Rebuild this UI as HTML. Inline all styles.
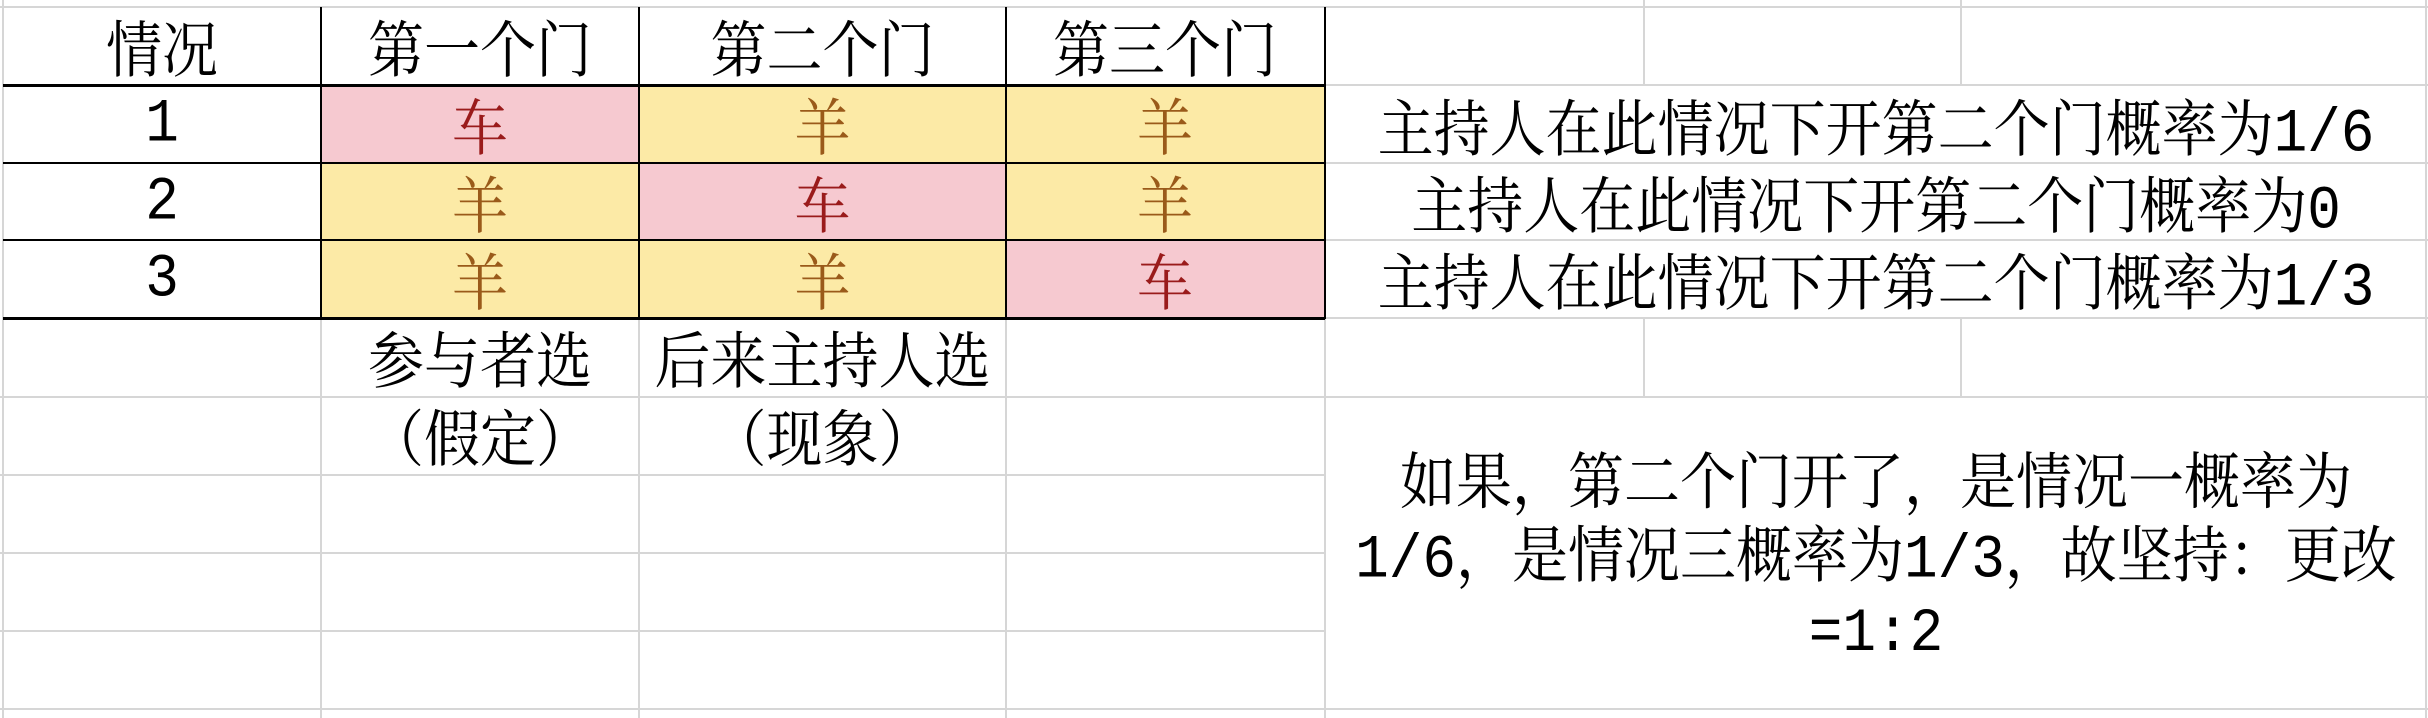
<!DOCTYPE html>
<html><head><meta charset="utf-8"><style>
body{margin:0;width:2428px;height:718px;background:#fff;position:relative;overflow:hidden;font-family:"Liberation Mono","Noto Serif CJK SC",serif;}
.h{position:absolute;height:2px;background:#d6d6d6}
.v{position:absolute;width:2px;background:#d6d6d6}
.c{position:absolute;display:flex;align-items:center;justify-content:center;font-size:56px;color:#000;white-space:nowrap}
.c span{display:inline-block;transform:scaleY(1.1)}
.p{background:#f6c9d0}.y{background:#fceaa6}
.car{color:#9a1b1b}.sh{color:#9a5a1a}
.k{background:#000}
</style></head><body>
<div class="c p car" style="left:321px;top:85px;width:318px;height:78px"><span>车</span></div>
<div class="c y sh" style="left:639px;top:85px;width:367px;height:78px"><span>羊</span></div>
<div class="c y sh" style="left:1006px;top:85px;width:318px;height:78px"><span>羊</span></div>
<div class="c y sh" style="left:321px;top:163px;width:318px;height:77px"><span>羊</span></div>
<div class="c p car" style="left:639px;top:163px;width:367px;height:77px"><span>车</span></div>
<div class="c y sh" style="left:1006px;top:163px;width:318px;height:77px"><span>羊</span></div>
<div class="c y sh" style="left:321px;top:240px;width:318px;height:78px"><span>羊</span></div>
<div class="c y sh" style="left:639px;top:240px;width:367px;height:78px"><span>羊</span></div>
<div class="c p car" style="left:1006px;top:240px;width:318px;height:78px"><span>车</span></div>
<div class="h" style="left:0;top:6px;width:2428px"></div>
<div class="h" style="left:1324px;top:84px;width:1104px"></div>
<div class="h" style="left:1324px;top:162px;width:1104px"></div>
<div class="h" style="left:1324px;top:239px;width:1104px"></div>
<div class="h" style="left:1324px;top:317px;width:1104px"></div>
<div class="h" style="left:0;top:396px;width:2428px"></div>
<div class="h" style="left:0;top:474px;width:1324px"></div>
<div class="h" style="left:0;top:552px;width:1324px"></div>
<div class="h" style="left:0;top:630px;width:1324px"></div>
<div class="h" style="left:0;top:708px;width:2428px"></div>
<div class="v" style="left:2px;top:0;height:718px"></div>
<div class="v" style="left:320px;top:318px;height:400px"></div>
<div class="v" style="left:638px;top:318px;height:400px"></div>
<div class="v" style="left:1005px;top:318px;height:400px"></div>
<div class="v" style="left:1643px;top:0;height:85px"></div>
<div class="v" style="left:1960px;top:0;height:85px"></div>
<div class="v" style="left:1643px;top:318px;height:79px"></div>
<div class="v" style="left:1960px;top:318px;height:79px"></div>
<div class="v" style="left:2425px;top:0;height:718px"></div>
<div class="v" style="left:1324px;top:318px;height:400px"></div>
<div class="k" style="position:absolute;left:3px;top:84px;width:1322px;height:3px"></div>
<div class="k" style="position:absolute;left:3px;top:162px;width:1322px;height:2px"></div>
<div class="k" style="position:absolute;left:3px;top:239px;width:1322px;height:2px"></div>
<div class="k" style="position:absolute;left:3px;top:317px;width:1322px;height:3px"></div>
<div class="k" style="position:absolute;left:320px;top:7px;width:2px;height:312px"></div>
<div class="k" style="position:absolute;left:638px;top:7px;width:2px;height:312px"></div>
<div class="k" style="position:absolute;left:1005px;top:7px;width:2px;height:312px"></div>
<div class="k" style="position:absolute;left:1324px;top:7px;width:2px;height:312px"></div>
<div class="c" style="left:3px;top:8px;width:318px;height:76px"><span>情况</span></div>
<div class="c" style="left:321px;top:8px;width:318px;height:76px"><span>第一个门</span></div>
<div class="c" style="left:639px;top:8px;width:367px;height:76px"><span>第二个门</span></div>
<div class="c" style="left:1006px;top:8px;width:318px;height:76px"><span>第三个门</span></div>
<div class="c" style="left:3px;top:85px;width:318px;height:78px"><span>1</span></div>
<div class="c" style="left:3px;top:163px;width:318px;height:77px"><span>2</span></div>
<div class="c" style="left:3px;top:240px;width:318px;height:78px"><span>3</span></div>
<div class="c" style="left:321px;top:318px;width:318px;height:78px"><span>参与者选</span></div>
<div class="c" style="left:639px;top:318px;width:367px;height:78px"><span>后来主持人选</span></div>
<div class="c" style="left:321px;top:396px;width:318px;height:78px"><span>（假定）</span></div>
<div class="c" style="left:639px;top:396px;width:367px;height:78px"><span>（现象）</span></div>
<div class="c" style="left:1326px;top:86px;width:1100px;height:77px"><span>主持人在此情况下开第二个门概率为1/6</span></div>
<div class="c" style="left:1326px;top:163px;width:1100px;height:77px"><span>主持人在此情况下开第二个门概率为0</span></div>
<div class="c" style="left:1326px;top:240px;width:1100px;height:78px"><span>主持人在此情况下开第二个门概率为1/3</span></div>
<div style="position:absolute;left:1326px;top:450px;width:1100px;text-align:center;font-size:56px;line-height:67px;white-space:nowrap;transform:scaleY(1.1);transform-origin:center top">如果，第二个门开了，是情况一概率为<br>1/6，是情况三概率为1/3，故坚持：更改<br>=1:2</div>
</body></html>
